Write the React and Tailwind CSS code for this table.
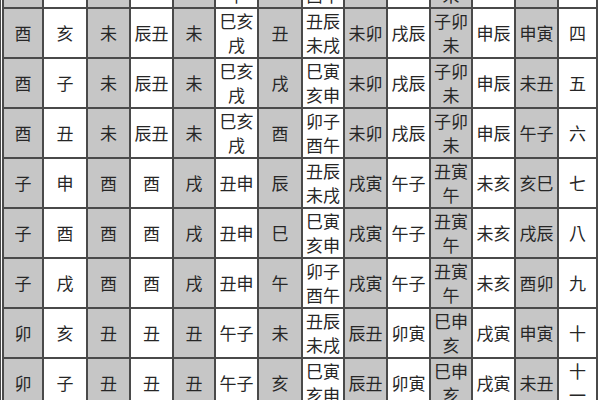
import React from "react";

const rows = [
  ["丑", "子", "巳", "申", "未", "寅巳/申", "申", "卯子/酉午", "丑亥", "申午", "子卯/未", "子卯", "辰戌", "三"],
  ["酉", "亥", "未", "辰丑", "未", "巳亥/戌", "丑", "丑辰/未戌", "未卯", "戌辰", "子卯/未", "申辰", "申寅", "四"],
  ["酉", "子", "未", "辰丑", "未", "巳亥/戌", "戌", "巳寅/亥申", "未卯", "戌辰", "子卯/未", "申辰", "未丑", "五"],
  ["酉", "丑", "未", "辰丑", "未", "巳亥/戌", "酉", "卯子/酉午", "未卯", "戌辰", "子卯/未", "申辰", "午子", "六"],
  ["子", "申", "酉", "酉", "戌", "丑申", "辰", "丑辰/未戌", "戌寅", "午子", "丑寅/午", "未亥", "亥巳", "七"],
  ["子", "酉", "酉", "酉", "戌", "丑申", "巳", "巳寅/亥申", "戌寅", "午子", "丑寅/午", "未亥", "戌辰", "八"],
  ["子", "戌", "酉", "酉", "戌", "丑申", "午", "卯子/酉午", "戌寅", "午子", "丑寅/午", "未亥", "酉卯", "九"],
  ["卯", "亥", "丑", "丑", "丑", "午子", "未", "丑辰/未戌", "辰丑", "卯寅", "巳申/亥", "戌寅", "申寅", "十"],
  ["卯", "子", "丑", "丑", "丑", "午子", "亥", "巳寅/亥申", "辰丑", "卯寅", "巳申/亥", "戌寅", "未丑", "十/一"],
];

function Cell({ text, gray }) {
  const lines = text.split("/");
  return (
    <div
      className={
        "h-[48px] flex flex-col items-center justify-center text-[17px] leading-[24px] text-[#262626] " +
        (gray ? "bg-[#c6c6c6]" : "bg-white")
      }
    >
      {lines.map((l, i) => (
        <span key={i} className="whitespace-nowrap">
          {l}
        </span>
      ))}
    </div>
  );
}

export default function App() {
  return (
    <div
      className="w-[600px] h-[400px] overflow-hidden bg-white"
      style={{ fontFamily: '"Noto Sans CJK TC", "Noto Sans CJK SC", sans-serif' }}
    >
      <div className="w-[598px] border-l border-[#4a4a4a] pl-[1px] -mt-[43px]">
        <div className="grid grid-cols-[38px_42px_41px_41px_40px_41px_42px_40px_41px_41px_40px_41px_41px_37px] gap-[2px] p-[2px] bg-[#4a4a4a] w-[596px]">
          {rows.map((r, ri) =>
            r.map((t, ci) => <Cell key={ri + "-" + ci} text={t} gray={ci % 2 === 0} />)
          )}
        </div>
      </div>
    </div>
  );
}
